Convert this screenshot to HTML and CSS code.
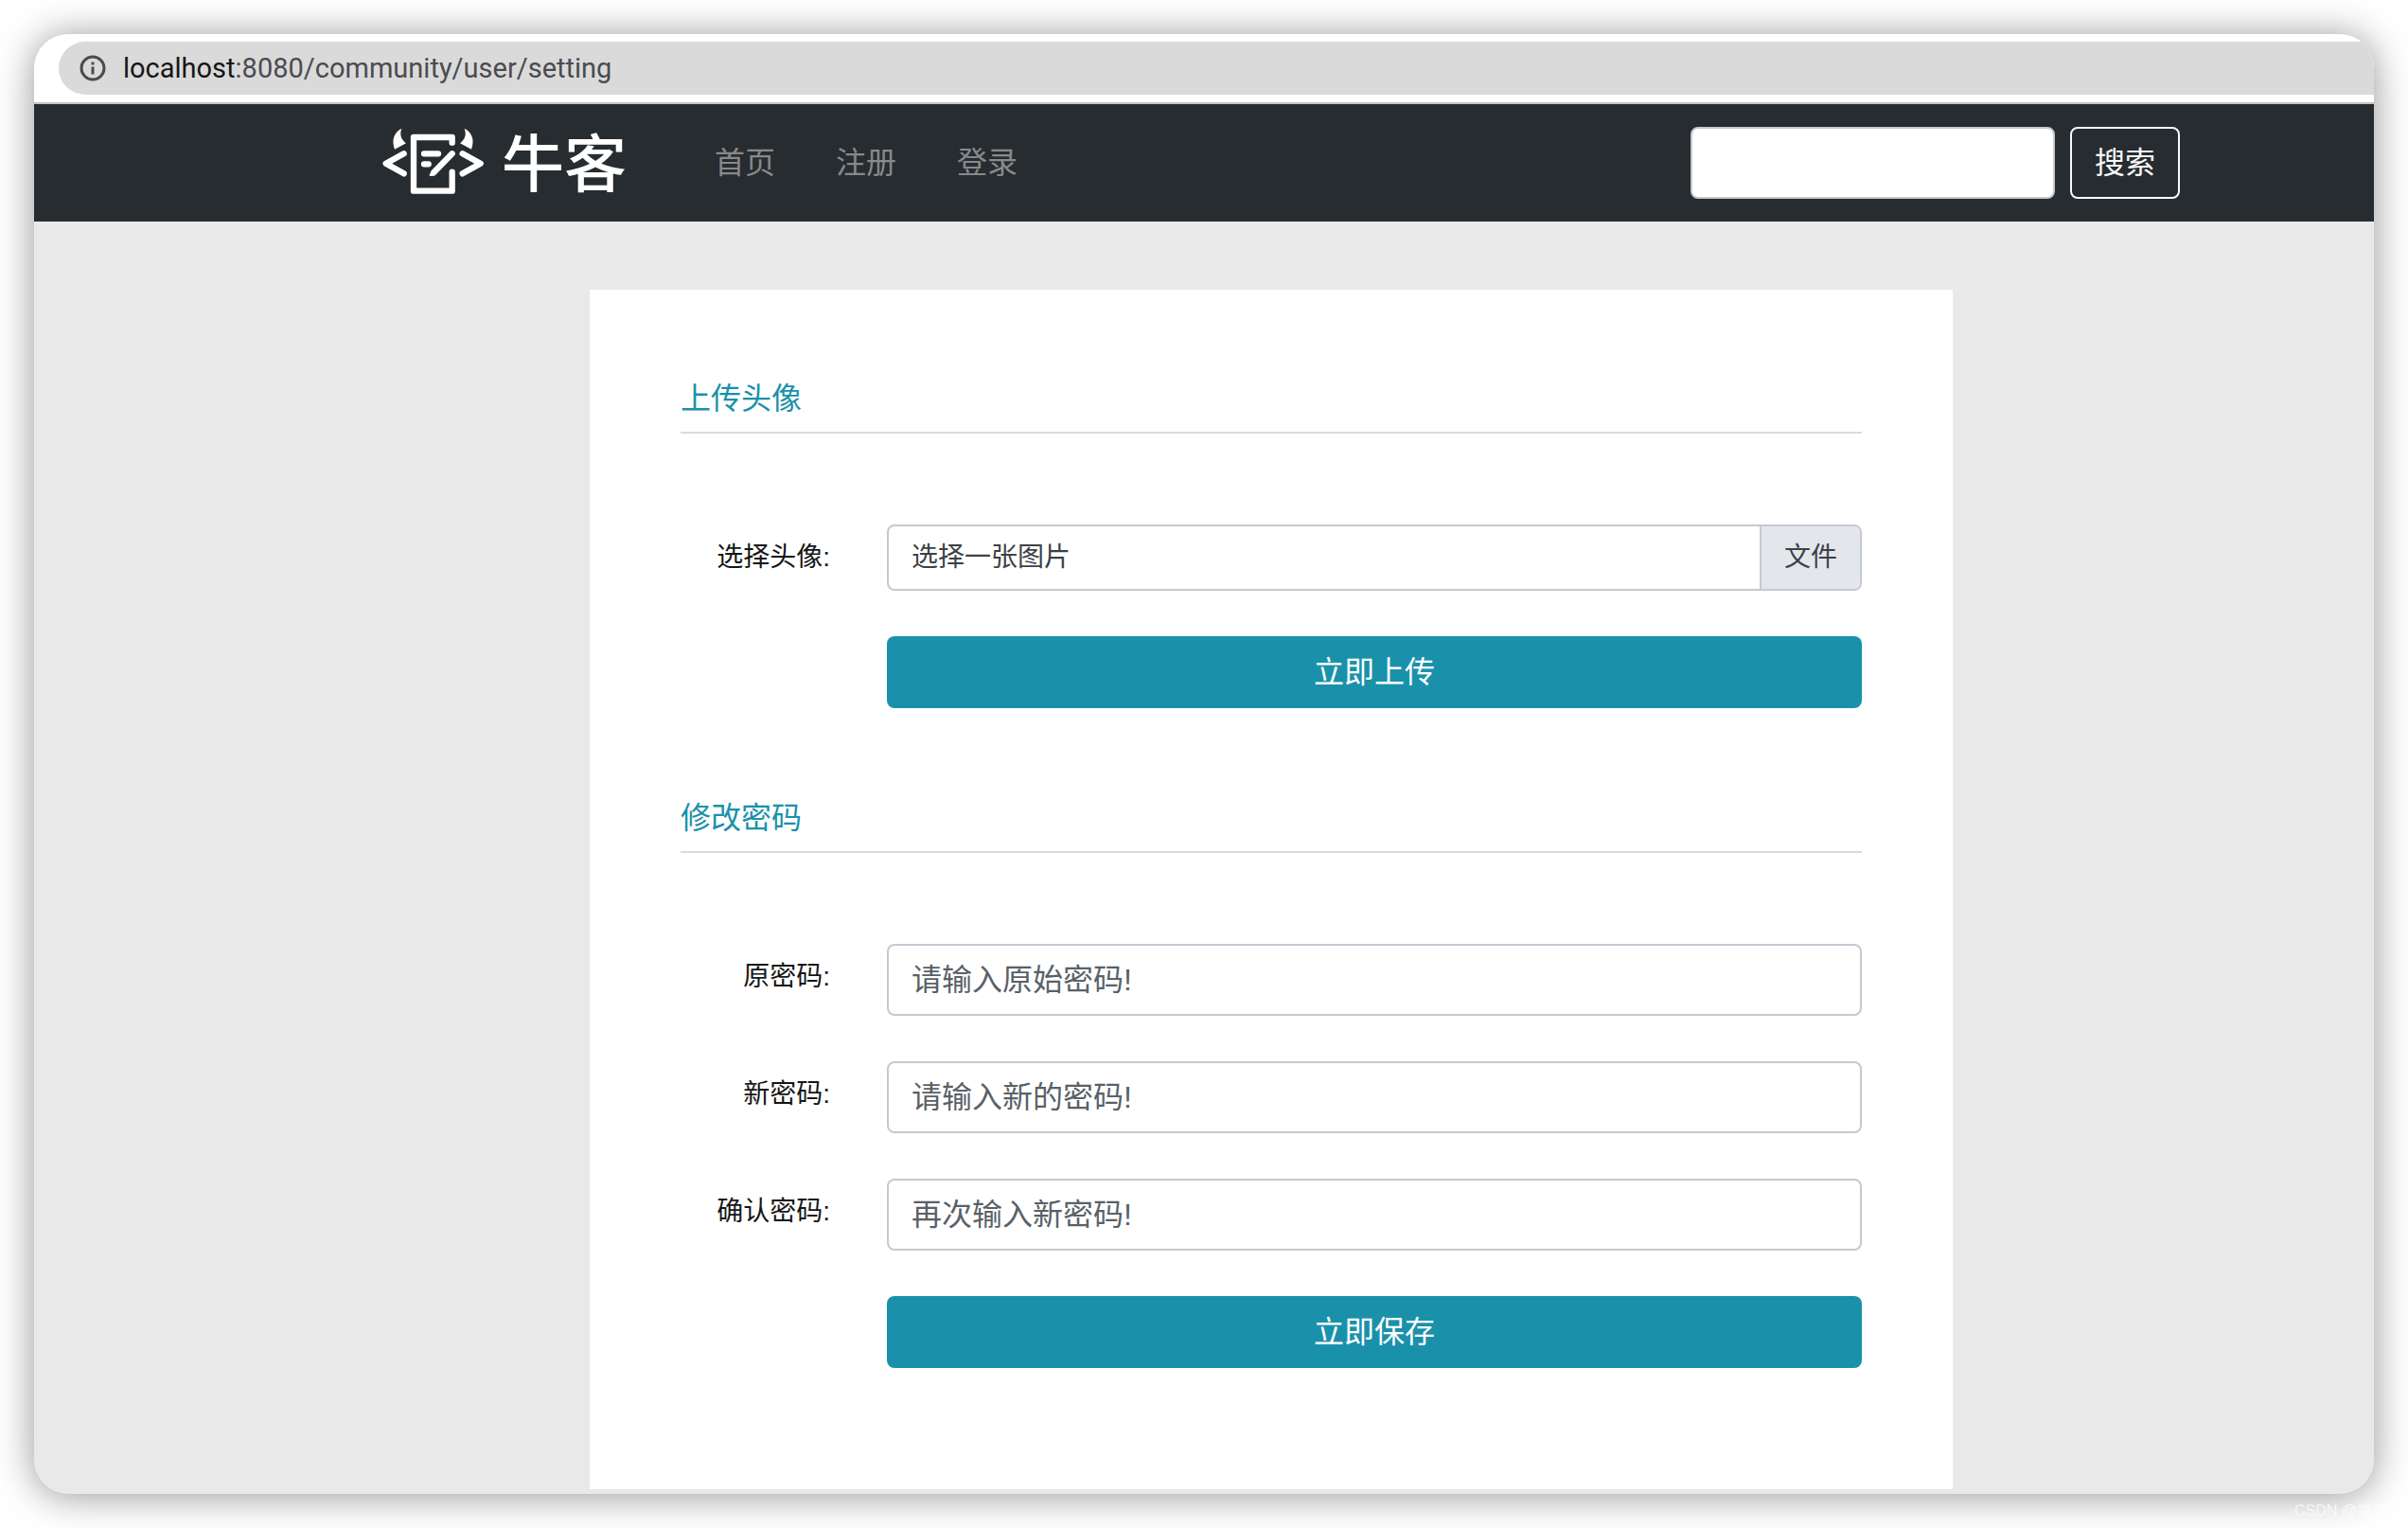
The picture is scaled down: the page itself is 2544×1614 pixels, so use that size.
FILE: index.html
```html
<!DOCTYPE html>
<html lang="zh-CN">
<head>
<meta charset="utf-8">
<meta name="viewport" content="width=device-width, initial-scale=1">
<title>牛客 - 账号设置</title>
<link rel="stylesheet" href="styles.css">
</head>
<body>
<div class="window">
  <div class="toolbar">
    <div class="address">
      <svg class="address-icon" viewBox="0 0 28 28" aria-hidden="true">
        <circle cx="14" cy="14" r="12" fill="none" stroke="currentColor" stroke-width="3"/>
        <path d="M14 12.500V20.500M14 7.500V10.500" stroke="currentColor" stroke-width="3"/>
      </svg>
      <span class="address-url"><span class="address-host">localhost</span>:8080/community/user/setting</span>
    </div>
  </div>
  <header class="navbar">
    <div class="navbar-inner">
      <a class="brand" href="#">
        <svg class="brand-icon" viewBox="70 75 327 213" aria-hidden="true">
          <g fill="none" stroke="#fff" stroke-width="19" stroke-linecap="round" stroke-linejoin="round">
            <path d="M141 157 84 188l57 32M327 157l57 31-57 32"/>
            <path d="M294 122v-17H172v170h122v-60"/>
            <path d="M205 157h45M205 190h14M294 157l-57 58"/>
          </g>
          <g fill="#fff">
            <path d="M229 210 222 224q0 4 4 4l12-1 8-8z"/>
            <path d="M134 77C108 90 102 115 112 143L148 124C134 112 126 99 134 77z"/>
            <path d="M333 77C359 90 365 115 355 143L319 124C333 112 341 99 333 77z"/>
          </g>
        </svg>
        <span class="brand-name">牛客</span>
      </a>
      <nav class="nav">
        <a href="#">首页</a>
        <a href="#">注册</a>
        <a href="#">登录</a>
      </nav>
      <form class="search">
        <input class="control search-input" type="search" aria-label="搜索">
        <button class="search-button" type="button">搜索</button>
      </form>
    </div>
  </header>
  <main class="main">
    <div class="card">
      <section class="section">
        <h1 class="title">上传头像</h1>
        <form class="form">
          <label class="label" for="avatar">选择头像:</label>
          <div class="file">
            <input class="file-input" type="file" id="avatar">
            <span class="file-name">选择一张图片</span>
            <span class="file-browse">文件</span>
          </div>
          <button class="submit" type="button">立即上传</button>
        </form>
      </section>
      <section class="section">
        <h2 class="title">修改密码</h2>
        <form class="form">
          <label class="label" for="old-password">原密码:</label>
          <input class="control" type="password" id="old-password" placeholder="请输入原始密码!">
          <label class="label" for="new-password">新密码:</label>
          <input class="control" type="password" id="new-password" placeholder="请输入新的密码!">
          <label class="label" for="confirm-password">确认密码:</label>
          <input class="control" type="password" id="confirm-password" placeholder="再次输入新密码!">
          <button class="submit" type="button">立即保存</button>
        </form>
      </section>
    </div>
  </main>
</div>
<footer class="credit">CSDN @美夕</footer>
</body>
</html>
```
FILE: styles.css
```css
* {
  box-sizing: border-box;
}

body {
  display: flex;
  flex-direction: column;
  min-height: 100vh;
  margin: 0;
  padding: 36px 36px 0;
  background: #fff;
  color: #212529;
  font-family: "Liberation Sans", "Noto Sans CJK SC", sans-serif;
  font-size: 32px;
  line-height: 48px;
}

input,
button {
  font: inherit;
}

.window {
  display: flex;
  flex: 1;
  flex-direction: column;
  overflow: hidden;
  border-radius: 36px;
  background: #e9e9e9;
  box-shadow: 0 2px 40px rgba(0, 0, 0, 0.42);
}

/* Browser toolbar */
.toolbar {
  padding: 8px 0 8px 26px;
  border-bottom: 2px solid #c0c4c4;
  background: #fff;
}

.address {
  display: flex;
  align-items: center;
  gap: 18px;
  height: 56px;
  padding-left: 22px;
  border-radius: 28px 0 0 28px;
  background: #dadada;
  color: #4b4b50;
  font-family: Roboto, sans-serif;
  font-size: 29px;
}

.address-icon {
  width: 28px;
  height: 28px;
}

.address-host {
  color: #161616;
}

/* Site header */
.navbar {
  padding: 24px 0 24px 142px;
  background: #272c30;
}

.navbar-inner {
  display: flex;
  align-items: center;
  max-width: 1920px;
  height: 76px;
  margin: 0 auto;
  padding-left: 20px;
}

.brand {
  display: flex;
  align-items: center;
  gap: 18px;
  padding-bottom: 4px;
  color: #fff;
  text-decoration: none;
}

.brand-icon {
  width: 109px;
  height: 71px;
}

.brand-name {
  padding-top: 8px;
  font-size: 66px;
  font-weight: 500;
  line-height: 72px;
}

.nav {
  display: flex;
  gap: 64px;
  margin-left: 93px;
}

.nav a {
  color: #87898b;
  text-decoration: none;
}

.search {
  display: flex;
  gap: 16px;
  margin-left: auto;
}

.search-button {
  width: 116px;
  height: 76px;
  padding: 0;
  border: 2px solid #f8f9fa;
  border-radius: 8px;
  background: transparent;
  color: #f8f9fa;
}

/* Settings card */
.main {
  padding: 72px 0 5px 142px;
}

.card {
  display: flex;
  flex-direction: column;
  gap: 97px;
  max-width: 1440px;
  margin: 0 auto;
  padding: 96px 96px 128px;
  background: #fff;
}

.title {
  margin: 0 0 96px;
  padding-bottom: 16px;
  border-bottom: 2px solid #d8dbdf;
  color: #1a91aa;
  font-size: 32px;
  font-weight: 400;
  line-height: 38px;
}

.form {
  display: grid;
  grid-template-columns: 158px 1fr;
  gap: 48px 60px;
}

.label {
  height: 70px;
  color: #161616;
  font-size: 28px;
  line-height: 70px;
  text-align: right;
}

.control {
  width: 100%;
  height: 76px;
  padding: 0 24px;
  border: 2px solid #c4c9d2;
  border-radius: 8px;
  background: #fff;
  color: #495057;
  outline: none;
}

.search .search-input {
  width: 385px;
}

.control::placeholder {
  color: #596168;
  opacity: 1;
}

.file {
  position: relative;
  display: flex;
  height: 70px;
  overflow: hidden;
  border: 2px solid #c4c9d2;
  border-radius: 8px;
  color: #3c4146;
  font-size: 28px;
  line-height: 66px;
}

.file-input {
  position: absolute;
  inset: 0;
  width: 100%;
  opacity: 0;
}

.file-name {
  flex: 1;
  padding-left: 24px;
}

.file-browse {
  padding: 0 24px;
  border-left: 2px solid #c4c9d2;
  background: #e3e6eb;
}

.submit {
  grid-column: 2;
  height: 76px;
  border: 0;
  border-radius: 8px;
  background: #1a91aa;
  color: #fff;
}

/* Attribution below the window */
.credit {
  z-index: 1;
  height: 36px;
  margin-right: -14px;
  color: rgba(255, 255, 255, 0.7);
  font-size: 16px;
  line-height: 36px;
  text-align: right;
}
```
